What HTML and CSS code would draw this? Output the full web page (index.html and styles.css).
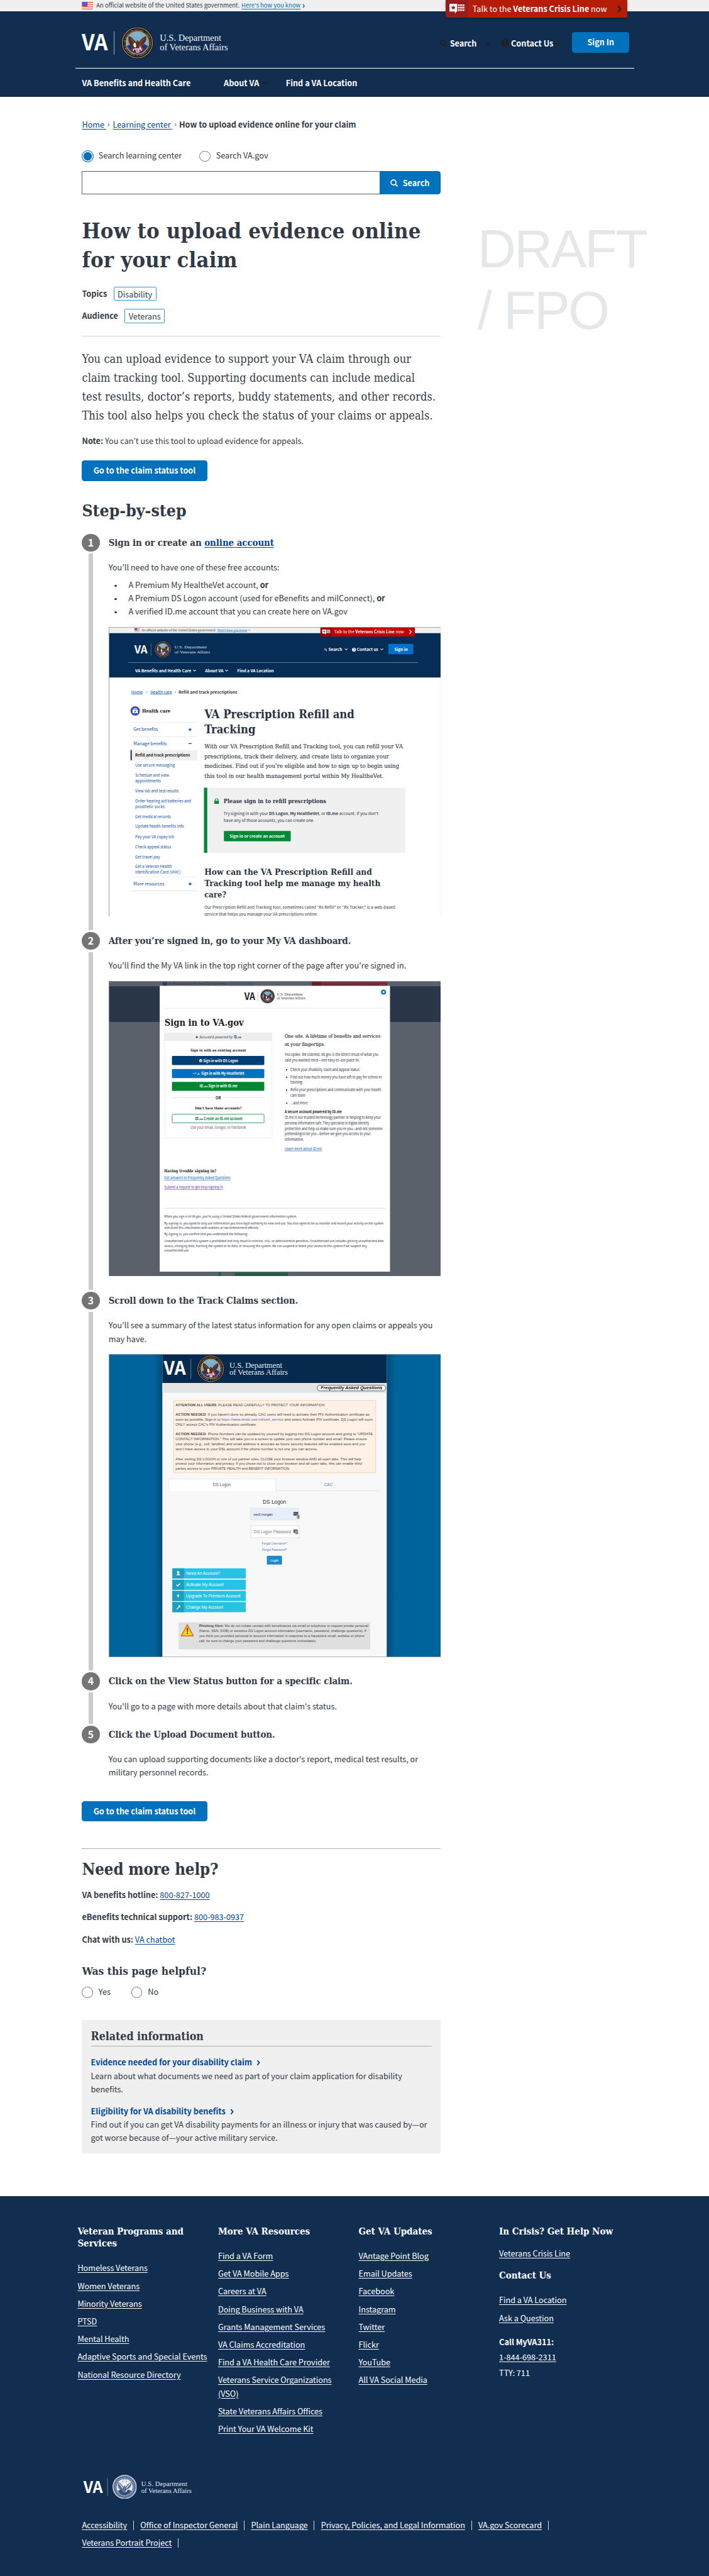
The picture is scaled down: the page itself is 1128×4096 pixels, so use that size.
FILE: index.html
```html
<!DOCTYPE html>
<html lang="en">
<head>
<meta charset="utf-8">
<title>How to upload evidence online for your claim</title>
<link rel="stylesheet" href="styles.css">
</head>
<body>
<svg class="defs" width="0" height="0" aria-hidden="true">
  <symbol id="flag" viewBox="0 0 20 14">
    <path fill="#fff" d="M0 0h20v14H0z"/>
    <path fill="#ee6a50" d="M0 0h20v2H0zM0 4h20v2H0zM0 8h20v2H0zM0 12h20v2H0z"/>
    <path fill="#3a48c8" d="M0 0h10v8H0z"/>
    <path stroke="#c9cff5" stroke-width="1" stroke-dasharray="1 1.6" d="M1 1.8h8.500M1.500 4h8M1 6.200h8.500"/>
  </symbol>
  <symbol id="sealmono" viewBox="0 0 58 58">
    <circle cx="29" cy="29" r="28" fill="#8c9bb3" stroke="#dfe5ee" stroke-width="1.500"/>
    <circle cx="29" cy="29" r="24" fill="none" stroke="#26416b" stroke-width="3" stroke-dasharray="1.800 1.600"/>
    <circle cx="29" cy="29" r="20" fill="#e9edf3" stroke="#12305a" stroke-width="1"/>
    <path d="M13 18c4 0 7 3 9 6l5 5 2-4 3 4c3-5 6-9 13-11 1 6-1 11-5 14l-6 3-4 7-5-2-4 2-4-8c-4-3-5-8-4-16z" fill="#5b6f90"/>
    <path d="M15 20l10 12M43 20L33 32" stroke="#fff" stroke-width="1.500"/>
    <path d="M13 38c5 8 9 10 16 10s12-3 16-10l-8-3-4 6h-8l-4-6z" fill="#314c75"/>
    <path d="M26 12h1.500M31 12h1.500M24 16h1.500M32.500 16H34" stroke="#12305a" stroke-width="1.800"/>
  </symbol>
  <symbol id="down" viewBox="0 0 12 8"><path d="M1.500 1.500L6 6l4.500-4.500" fill="none" stroke="currentColor" stroke-width="2.400"/></symbol>
  <symbol id="right" viewBox="0 0 8 14"><path d="M1.500 1.500L6.200 7l-4.700 5.500" fill="none" stroke="currentColor" stroke-width="2.600"/></symbol>
  <symbol id="glass" viewBox="0 0 14 14"><circle cx="5.800" cy="5.800" r="4.600" fill="none" stroke="currentColor" stroke-width="1.900"/><path d="M9 9l4 4" stroke="currentColor" stroke-width="2.200"/></symbol>
  <symbol id="crisis" viewBox="0 0 29 18">
    <path fill="#fff" d="M1 0h13v14h-1l-3 4v-4H1q-1 0-1-1V1q0-1 1-1z"/>
    <path fill="#981b1e" d="M7 2.500l1.200 3h3.300L8.900 7.600l1 3.200L7 8.900l-2.900 1.900 1-3.200L2.500 5.500h3.300z"/>
    <path stroke="#fff" stroke-width="3" stroke-dasharray="3 1" d="M15.500 2.500H28M15.500 7H28M15.500 11.500H28"/>
  </symbol>
  <symbol id="lock" viewBox="0 0 12 14"><path fill="currentColor" d="M1 6h10q1 0 1 1v6q0 1-1 1H1q-1 0-1-1V7q0-1 1-1z"/><path d="M2.800 7V4a3.200 3.200 0 0 1 6.400 0v3" fill="none" stroke="currentColor" stroke-width="1.800"/></symbol>
</svg>

<div class="page">
  <div class="gov">
    <svg class="gov-flag"><use href="#flag"/></svg>
    <span>An official website of the United States government.</span>
    <a href="#">Here's how you know</a>
    <svg class="gov-chev"><use href="#right"/></svg>
  </div>
  <a class="crisis" href="#">
    <span class="crisis-icon"><svg width="29" height="18"><use href="#crisis"/></svg></span>
    <span class="crisis-text">Talk to the <b>Veterans Crisis Line</b> now</span>
    <svg class="crisis-chev"><use href="#right"/></svg>
  </a>
  <header class="header">
    <div class="header-top">
      <svg class="logo" width="268" height="60" viewBox="0 0 268 60">
        <text class="n b" x="0" y="43" font-size="39.600" textLength="47" lengthAdjust="spacingAndGlyphs" fill="#fff">VA</text>
        <path d="M58.500 9v42" stroke="#b7c1cf"/>
        <g transform="translate(71.500 0.500)">
          <g id="seal">
            <circle cx="29" cy="29" r="28.500" fill="#141433" stroke="#0d0d26"/>
            <circle cx="29" cy="29" r="27.200" fill="none" stroke="#c79a3a" stroke-width="1.300"/>
            <path id="ring" d="M7.500 29a21.500 21.500 0 0 1 43 0a21.500 21.500 0 0 1-43 0" fill="none"/>
            <text class="sealtext" font-size="4.800" fill="#d9b861"><textPath href="#ring" startOffset="0" textLength="134">OF VETERANS AFFAIRS · UNITED STATES OF AMERICA · DEPARTMENT ·</textPath></text>
            <circle cx="29" cy="29" r="20.500" fill="#75b1d6" stroke="#c79a3a" stroke-width="1.300"/>
            <path d="M10 35c4 8 10 13 19 13.500S44 43 48 35l-7-4-12 5-12-5z" fill="#28356e"/>
            <path d="M18 41l5-8 3 2-4 9zM40 41l-5-8-3 2 4 9z" fill="#c8323c"/>
            <path d="M20.500 42.500l4.500-8 1.500 1-4 8zM37.500 42.500l-4.500-8-1.500 1 4 8z" fill="#f1eef0"/>
            <path d="M13 17c4 0 7 3 9 6l5 5 2-4 3 4c3-5 6-9 13-11 1 6-1 11-5 14l-6 3-4 7-5-2-4 2-4-8c-4-3-5-8-4-16z" fill="#5a2f1a"/>
            <path d="M17 21l7 9 2 6M41 21l-6 8-3 6" stroke="#96582d" stroke-width="1.200" fill="none"/>
            <path d="M22 31c0-2 3-3 4-1l1 5-2 3-3-3z" fill="#f7f4ee"/>
            <path d="M24 39h11l-3 8h-5z" fill="#e8e4ea"/>
            <path d="M27 40v6M30 40v6M33 40v4" stroke="#c8323c" stroke-width="1.300"/>
            <path d="M26 12h1.500M30 12h1.500M24.500 15h1.500M28.500 15H30M32.500 15H34" stroke="#e8c34b" stroke-width="1.800"/>
          </g>
        </g>
        <g class="t" fill="#f0f2f5" font-size="16.500"><text x="141" y="26" textLength="111">U.S. Department</text><text x="141" y="43" textLength="123">of Veterans Affairs</text></g>
      </svg>
      <div class="tools">
        <svg class="i-glass"><use href="#glass"/></svg><span>Search</span><svg class="i-down"><use href="#down"/></svg>
        <span class="i-help">?</span><span>Contact Us</span><svg class="i-down i-tight"><use href="#down"/></svg>
        <a class="btn signin" href="#">Sign In</a>
      </div>
    </div>
    <nav class="nav"><a class="nav-a" href="#">VA Benefits and Health Care</a><a class="nav-b" href="#">About VA <svg><use href="#down"/></svg></a><a href="#">Find a VA Location</a></nav>
  </header>

  <div class="body">
    <main class="main">
      <div class="crumbs"><a href="#">Home </a><i>›</i><a href="#">Learning center </a><i class="grey">›</i><b>How to upload evidence online for your claim</b></div>
      <div class="scope"><span class="radio big on"></span><span class="scope-a">Search learning center</span><span class="radio"></span><span>Search VA.gov</span></div>
      <div class="search"><div class="field"></div><div class="search-btn"><svg width="14" height="14"><use href="#glass"/></svg>Search</div></div>
      <h1>How to upload evidence online<br>for your claim</h1>
      <div class="meta"><b>Topics</b><span class="tag">Disability</span></div>
      <div class="meta"><b>Audience</b><span class="tag">Veterans</span></div>
      <hr class="rule">
      <p class="intro">You can upload evidence to support your VA claim through our<br>claim tracking tool. Supporting documents can include medical<br>test results, doctor’s reports, buddy statements, and other records.<br>This tool also helps you check the status of your claims or appeals.</p>
      <p class="note"><b>Note:</b> You can’t use this tool to upload evidence for appeals.</p>
      <a class="btn go" href="#">Go to the claim status tool</a>
      <h2 class="steps-title">Step-by-step</h2>

      <ol class="steps">
        <li class="step">
          <div class="mark"><span>1</span><i></i></div>
          <div class="step-body">
            <h3>Sign in or create an <a href="#">online account</a></h3>
            <p>You’ll need to have one of these free accounts:</p>
            <ul class="dots"><li>A Premium My HealtheVet account, <b>or</b></li><li>A Premium DS Logon account (used for eBenefits and milConnect), <b>or</b></li><li>A verified ID.me account that you can create here on VA.gov</li></ul>
            <svg class="shot" height="523" viewBox="15.200 31.400 1517.400 1491" preserveAspectRatio="none">
              <path fill="#fff" d="M15 31h1519v1493H15z"/>
              <path fill="#f0f0f0" d="M15 31h1519v33H15z"/>
              <use href="#flag" x="132" y="36" width="26" height="21"/>
              <path fill="#062d55" d="M15 63h1519v228H15z"/>
              <path fill="#c30000" d="M982 31h431v45q0 4-4 4H986q-4 0-4-4z"/><path fill="#990000" d="M982 31h52v49h-48q-4 0-4-4z"/>
              <svg x="989" y="44" width="40" height="26" viewBox="0 0 29 18" preserveAspectRatio="none"><use href="#crisis" width="29" height="18"/></svg>
              <path d="M1388 47l9 9-9 10" fill="none" stroke="#fff" stroke-width="4"/>
              <g class="n" fill="#3e4551">
                <text x="166" y="53" font-size="16.500" textLength="337" lengthAdjust="spacingAndGlyphs">An official website of the United States government</text>
                <text x="510" y="53" font-size="16.500" textLength="137" lengthAdjust="spacingAndGlyphs" fill="#0080d0" text-decoration="underline">Here's how you know</text>
                <path d="M651 44l6 6 6-6" fill="none" stroke="#0080d0" stroke-width="2"/>
                <text x="1045" y="65" font-size="22" textLength="318" lengthAdjust="spacingAndGlyphs" fill="#fff">Talk to the <tspan class="b">Veterans Crisis Line</tspan> now</text>
              </g>
              <g fill="#fff">
                <text class="n b" x="132" y="166" font-size="56" textLength="60" lengthAdjust="spacingAndGlyphs">VA</text>
                <path d="M207 115h2v63h-2z" fill="#6b8099"/>
                <use href="#seal" transform="translate(224 103) scale(1.328 1.500)"/>
                <g class="t" font-size="23" fill="#dde3ea"><text x="316" y="142" textLength="147" lengthAdjust="spacingAndGlyphs">U.S. Department</text><text x="316" y="166" textLength="162" lengthAdjust="spacingAndGlyphs">of Veterans Affairs</text></g>
                <g class="n b" font-size="21.500">
                  <text x="1018" y="155" textLength="63" lengthAdjust="spacingAndGlyphs">Search</text>
                  <text x="1148" y="155" textLength="98" lengthAdjust="spacingAndGlyphs">Contact us</text>
                  <text x="136" y="263" textLength="256" lengthAdjust="spacingAndGlyphs">VA Benefits and Health Care</text>
                  <text x="455" y="263" textLength="84" lengthAdjust="spacingAndGlyphs">About VA</text>
                  <text x="602" y="263" textLength="167" lengthAdjust="spacingAndGlyphs">Find a VA Location</text>
                </g>
                <circle cx="1004" cy="146" r="4" fill="none" stroke="#fff" stroke-width="2"/><path d="M1007 149l4 5M1093 143l6 6 6-6M1256 143l6 6 6-6M401 252l6 6 6-6M547 252l6 6 6-6" fill="none" stroke="#fff" stroke-width="3"/>
                <ellipse cx="1135" cy="148" rx="9" ry="10"/><text class="n b" x="1131" y="154" font-size="16" fill="#062d55">?</text>
                <path fill="#c0cad5" d="M104 214h1324v2H104z"/>
                <rect x="1292" y="118" width="114" height="53" rx="5" fill="#0071c8"/><text class="n b" x="1319" y="153" font-size="21.500" textLength="61" lengthAdjust="spacingAndGlyphs">Sign in</text>
              </g>
              <g class="n" font-size="21.500" fill="#0b4f9e">
                <text x="118" y="373" textLength="52" lengthAdjust="spacingAndGlyphs" text-decoration="underline">Home</text><text x="185" y="372">›</text>
                <text x="205" y="373" textLength="99" lengthAdjust="spacingAndGlyphs" text-decoration="underline">Health care</text><text x="315" y="372">›</text>
                <text class="b" x="334" y="373" textLength="268" lengthAdjust="spacingAndGlyphs" fill="#323a45">Refill and track prescriptions</text>
              </g>
              <ellipse cx="136" cy="463" rx="21.500" ry="24" fill="#3a50b5"/><rect x="124" y="457" width="24" height="18" rx="2" fill="#fff"/><path d="M131 457v-6h10v6" fill="none" stroke="#fff" stroke-width="3"/><path d="M136 461v10M131 466h10" stroke="#3a50b5" stroke-width="3"/>
              <text class="s b" x="167" y="472" font-size="24" textLength="130" lengthAdjust="spacingAndGlyphs" fill="#111">Health care</text>
              <path fill="#d8d9dc" d="M115 522h305v2H115zM115 594h305v2H115zM115 1317h305v2H115zM115 1388h305v2H115z"/>
              <path fill="#f0f0f0" d="M115 664h305v53H115z"/><path fill="#111" d="M115 664h5v53h-5z"/>
              <path stroke="#0b4f9e" stroke-width="4" d="M379 559h15M386.500 551v16M379 631h15M379 1353h15M386.500 1345v16"/>
              <g class="n" fill="#0b4f9e" font-size="22.500">
                <text x="128" y="566" textLength="112" lengthAdjust="spacingAndGlyphs">Get benefits</text>
                <text x="128" y="638" textLength="153" lengthAdjust="spacingAndGlyphs">Manage benefits</text>
                <text x="128" y="1360" textLength="141" lengthAdjust="spacingAndGlyphs">More resources</text>
              </g>
              <g class="n" fill="#0b4f9e" font-size="20">
                <text class="b" x="136" y="698" textLength="250" lengthAdjust="spacingAndGlyphs" fill="#212121">Refill and track prescriptions</text>
                <text x="136" y="751" textLength="181" lengthAdjust="spacingAndGlyphs">Use secure messaging</text>
                <text x="136" y="802" textLength="155" lengthAdjust="spacingAndGlyphs">Schedule and view</text>
                <text x="136" y="830" textLength="117" lengthAdjust="spacingAndGlyphs">appointments</text>
                <text x="136" y="882" textLength="198" lengthAdjust="spacingAndGlyphs">View lab and test results</text>
                <text x="136" y="934" textLength="255" lengthAdjust="spacingAndGlyphs">Order hearing aid batteries and</text>
                <text x="136" y="962" textLength="134" lengthAdjust="spacingAndGlyphs">prosthetic socks</text>
                <text x="136" y="1014" textLength="163" lengthAdjust="spacingAndGlyphs">Get medical records</text>
                <text x="136" y="1065" textLength="223" lengthAdjust="spacingAndGlyphs">Update health benefits info</text>
                <text x="136" y="1117" textLength="178" lengthAdjust="spacingAndGlyphs">Pay your VA copay bill</text>
                <text x="136" y="1169" textLength="164" lengthAdjust="spacingAndGlyphs">Check appeal status</text>
                <text x="136" y="1221" textLength="113" lengthAdjust="spacingAndGlyphs">Get travel pay</text>
                <text x="136" y="1272" textLength="167" lengthAdjust="spacingAndGlyphs">Get a Veteran Health</text>
                <text x="136" y="1300" textLength="208" lengthAdjust="spacingAndGlyphs">Identification Card (VHIC)</text>
              </g>
              <g class="s b" fill="#2b3440">
                <text x="452" y="500" font-size="58" textLength="685" lengthAdjust="spacingAndGlyphs">VA Prescription Refill and</text>
                <text x="452" y="577" font-size="58" textLength="233" lengthAdjust="spacingAndGlyphs">Tracking</text>
                <text x="452" y="1305" font-size="44" textLength="765" lengthAdjust="spacingAndGlyphs">How can the VA Prescription Refill and</text>
                <text x="452" y="1363" font-size="44" textLength="804" lengthAdjust="spacingAndGlyphs">Tracking tool help me manage my health</text>
                <text x="452" y="1421" font-size="44" textLength="100" lengthAdjust="spacingAndGlyphs">care?</text>
              </g>
              <g class="s" fill="#323a45" font-size="30" stroke="#323a45" stroke-width=".5">
                <text x="452" y="657" textLength="906" lengthAdjust="spacingAndGlyphs">With our VA Prescription Refill and Tracking tool, you can refill your VA</text>
                <text x="452" y="707" textLength="842" lengthAdjust="spacingAndGlyphs">prescriptions, track their delivery, and create lists to organize your</text>
                <text x="452" y="757" textLength="889" lengthAdjust="spacingAndGlyphs">medicines. Find out if you’re eligible and how to sign up to begin using</text>
                <text x="452" y="808" textLength="819" lengthAdjust="spacingAndGlyphs">this tool in our health management portal within My HealtheVet.</text>
              </g>
              <path fill="#f0f0f0" d="M450 858h920v335H450z"/><path fill="#008a37" d="M450 858h15v335h-15z"/>
              <svg x="496" y="912" width="23" height="30" viewBox="0 0 12 14" preserveAspectRatio="none" color="#008a37"><use href="#lock" width="12" height="14"/></svg>
              <text class="s b" x="540" y="936" font-size="27" textLength="468" lengthAdjust="spacingAndGlyphs" fill="#2b3440">Please sign in to refill prescriptions</text>
              <g class="n" fill="#323a45" font-size="20.500">
                <text x="540" y="1000" textLength="706" lengthAdjust="spacingAndGlyphs">Try signing in with your <tspan class="b">DS Logon</tspan>, <tspan class="b">My HealtheVet</tspan>, or <tspan class="b">ID.me</tspan> account. If you don’t</text>
                <text x="540" y="1035" textLength="414" lengthAdjust="spacingAndGlyphs">have any of those accounts, you can create one.</text>
                <text x="452" y="1481" textLength="871" lengthAdjust="spacingAndGlyphs">Our Prescription Refill and Tracking tool, sometimes called “Rx Refill” or “Rx Tracker,” is a web-based</text>
                <text x="452" y="1516" textLength="518" lengthAdjust="spacingAndGlyphs">service that helps you manage your VA prescriptions online.</text>
              </g>
              <rect x="541" y="1080" width="305" height="54" rx="4" fill="#008a37"/><text class="n b" x="567" y="1115" font-size="20.500" textLength="252" lengthAdjust="spacingAndGlyphs" fill="#fff">Sign in or create an account</text>
              <rect x="16.500" y="32.800" width="1515" height="1488" fill="none" stroke="#999" stroke-width="2.600"/>
            </svg>
          </div>
        </li>

        <li class="step">
          <div class="mark"><span>2</span><i></i></div>
          <div class="step-body">
            <h3>After you’re signed in, go to your My VA dashboard.</h3>
            <p>You'll find the My VA link in the top right corner of the page after you're signed in.</p>
            <svg class="shot" height="533" viewBox="151.500 260 1385.500 1267" preserveAspectRatio="none">
              <path fill="#5b616b" d="M151 260h1387v1268H151z"/><path fill="#2a3748" d="M151 282h1387v153H151z"/>
              <path fill="#323a5e" d="M376 265h19v14h-19z"/><path fill="#7f2b37" d="M998 264h314v20H998z"/><path fill="#651e2b" d="M998 264h38v20h-38z"/>
              <g class="n" font-size="12.500"><text x="401" y="276" textLength="247" lengthAdjust="spacingAndGlyphs" fill="#242b36">An official website of the United States government</text><text x="653" y="276" textLength="100" lengthAdjust="spacingAndGlyphs" fill="#1b4a76" text-decoration="underline">Here's how you know</text><text x="1044" y="284" font-size="17" textLength="232" lengthAdjust="spacingAndGlyphs" fill="#2c3440">Talk to the Veterans Crisis Line now</text></g>
              <path fill="#16603e" d="M610 1507h9v18h-9zM676 1511h222v14H676z"/>
              <path fill="#fff" d="M364 280h960v1226H364z"/>
              <text class="n b" x="717" y="340" font-size="41" textLength="45" lengthAdjust="spacingAndGlyphs" fill="#212121">VA</text><path fill="#bbb" d="M772 304h2v42h-2z"/>
              <use href="#seal" transform="translate(784 295) scale(1.017 1.035)"/>
              <g class="t" font-size="16.500" fill="#333"><text x="852" y="323" textLength="108" lengthAdjust="spacingAndGlyphs">U.S. Department</text><text x="852" y="339" textLength="119" lengthAdjust="spacingAndGlyphs">of Veterans Affairs</text></g>
              <circle cx="1297" cy="307" r="10.500" fill="#0071bb"/><path d="M1293 303l8 8M1301 303l-8 8" stroke="#fff" stroke-width="3"/>
              <path fill="#e4e4e6" d="M383 375h922v2.500H383z"/><path fill="#ccc" d="M383 1233h922v2H383z"/>
              <text class="s b" x="384" y="451" font-size="39" textLength="330" lengthAdjust="spacingAndGlyphs" fill="#212121">Sign in to VA.gov</text>
              <rect x="384" y="482" width="448" height="451" fill="#fff" stroke="#ececec" stroke-width="2.500"/><path fill="#ededee" d="M383 481h450v35H383z"/>
              <svg x="514" y="494" width="9" height="11" viewBox="0 0 12 14" color="#212f45"><use href="#lock" width="12" height="14"/></svg>
              <g class="n" font-size="15.500" fill="#323a45"><text x="528" y="505" textLength="139" lengthAdjust="spacingAndGlyphs" font-style="italic">Secured &amp; powered by</text><text class="b" x="673" y="505" textLength="30" lengthAdjust="spacingAndGlyphs" fill="#243b60">ID.<tspan font-style="italic" font-size="12">me</tspan></text></g>
              <g class="s b" font-size="16" fill="#212121"><text x="492" y="561" textLength="232" lengthAdjust="spacingAndGlyphs">Sign in with an existing account</text><text x="511" y="810" textLength="194" lengthAdjust="spacingAndGlyphs">Don't have those accounts?</text><text x="383" y="1080" font-size="18" textLength="217" lengthAdjust="spacingAndGlyphs">Having trouble signing in?</text></g>
              <rect x="415" y="581" width="385" height="39" rx="4" fill="#003e73"/><rect x="415" y="637" width="385" height="39" rx="4" fill="#0071c1"/><rect x="415" y="692" width="385" height="39" rx="4" fill="#00872f"/><rect x="416" y="831" width="383" height="37" rx="4" fill="#fff" stroke="#2c9c58" stroke-width="2.500"/>
              <path d="M529 598l6-4 6 4v9h-12z" fill="#fff"/><path d="M532 600v5M535 600v5M538 600v5" stroke="#003e73" stroke-width="1.500"/><path d="M503 656h8q4-4 8 0M520 661q8 0 5-8M524 656l8 5" fill="none" stroke="#fff" stroke-width="2"/>
              <g class="n b" font-size="15.500" fill="#fff"><text x="545" y="607" textLength="146" lengthAdjust="spacingAndGlyphs">Sign in with DS Logon</text><text x="537" y="662" textLength="180" lengthAdjust="spacingAndGlyphs">Sign in with My HealtheVet</text><text x="530" y="717" textLength="158" lengthAdjust="spacingAndGlyphs">ID.<tspan font-style="italic" font-size="11">me</tspan> Sign in with ID.me</text><text x="597" y="766" textLength="22" lengthAdjust="spacingAndGlyphs" fill="#212121">OR</text><text x="511" y="856" textLength="198" lengthAdjust="spacingAndGlyphs" fill="#00872f"><tspan fill="#243b60">ID.<tspan font-style="italic" font-size="11">me</tspan></tspan> Create an ID.me account</text></g>
              <path fill="#ddd" d="M415 760h174v2H415zM626 760h174v2H626z"/>
              <text class="n" x="492" y="895" font-size="15" textLength="232" lengthAdjust="spacingAndGlyphs" fill="#5b616b">Use your email, Google, or Facebook</text>
              <g class="s" font-size="20.500" fill="#212121" stroke="#212121" stroke-width=".3"><text x="885" y="504" textLength="399" lengthAdjust="spacingAndGlyphs">One site. A lifetime of benefits and services</text><text x="885" y="538" textLength="169" lengthAdjust="spacingAndGlyphs">at your fingertips.</text></g>
              <g class="n" font-size="15" fill="#2b323c">
                <text x="885" y="582" textLength="390" lengthAdjust="spacingAndGlyphs">You spoke. We listened. VA.gov is the direct result of what you</text><text x="885" y="606" textLength="312" lengthAdjust="spacingAndGlyphs">said you wanted most—one easy-to-use place to:</text>
                <text x="909" y="645" textLength="288" lengthAdjust="spacingAndGlyphs">Check your disability claim and appeal status</text>
                <text x="909" y="677" textLength="381" lengthAdjust="spacingAndGlyphs">Find out how much money you have left to pay for school or</text><text x="909" y="700" textLength="49" lengthAdjust="spacingAndGlyphs">training</text>
                <text x="909" y="732" textLength="378" lengthAdjust="spacingAndGlyphs">Refill your prescriptions and communicate with your health</text><text x="909" y="756" textLength="62" lengthAdjust="spacingAndGlyphs">care team</text><text x="909" y="788" textLength="72" lengthAdjust="spacingAndGlyphs">...and more</text>
                <text class="b" x="885" y="827" textLength="238" lengthAdjust="spacingAndGlyphs" fill="#212121">A secure account powered by ID.me</text>
                <text x="885" y="851" textLength="401" lengthAdjust="spacingAndGlyphs">ID.me is our trusted technology partner in helping to keep your</text><text x="885" y="874" textLength="352" lengthAdjust="spacingAndGlyphs">personal information safe. They specialize in digital identity</text><text x="885" y="898" textLength="408" lengthAdjust="spacingAndGlyphs">protection and help us make sure you're you—and not someone</text><text x="885" y="922" textLength="358" lengthAdjust="spacingAndGlyphs">pretending to be you—before we give you access to your</text><text x="885" y="945" textLength="80" lengthAdjust="spacingAndGlyphs">information.</text>
                <text x="885" y="985" textLength="155" lengthAdjust="spacingAndGlyphs" fill="#0b5cad" text-decoration="underline">Learn more about ID.me</text>
                <text x="383" y="1111" textLength="276" lengthAdjust="spacingAndGlyphs" fill="#0b5cad" text-decoration="underline">Get answers to Frequently Asked Questions</text><text x="383" y="1151" textLength="245" lengthAdjust="spacingAndGlyphs" fill="#6a35a8" text-decoration="underline">Submit a request to get help signing in</text>
              </g>
              <path fill="#212121" d="M891 638h5v5h-5zM891 670h5v5h-5zM891 725h5v5h-5zM891 781h5v5h-5z"/>
              <g class="n" font-size="13.500" fill="#2b323c">
                <text x="383" y="1275" textLength="553" lengthAdjust="spacingAndGlyphs">When you sign in to VA.gov, you're using a United States federal government information system.</text>
                <text x="383" y="1303" textLength="914" lengthAdjust="spacingAndGlyphs">By signing in, you agree to only use information you have legal authority to view and use. You also agree to let us monitor and record your activity on the system</text>
                <text x="383" y="1323" textLength="396" lengthAdjust="spacingAndGlyphs">and share this information with auditors or law enforcement officials.</text>
                <text x="383" y="1351" textLength="349" lengthAdjust="spacingAndGlyphs">By signing in, you confirm that you understand the following:</text>
                <text x="383" y="1379" textLength="915" lengthAdjust="spacingAndGlyphs">Unauthorized use of this system is prohibited and may result in criminal, civil, or administrative penalties. Unauthorized use includes gaining unauthorized data</text>
                <text x="383" y="1400" textLength="844" lengthAdjust="spacingAndGlyphs">access, changing data, harming the system or its data, or misusing the system. We can suspend or block your access to this system if we suspect any</text>
                <text x="383" y="1421" textLength="104" lengthAdjust="spacingAndGlyphs">unauthorized use.</text>
              </g>
              <rect x="152.500" y="261" width="1383.500" height="1265" fill="none" stroke="#858991" stroke-width="2.300"/>
            </svg>
          </div>
        </li>

        <li class="step">
          <div class="mark"><span>3</span><i></i></div>
          <div class="step-body">
            <h3>Scroll down to the Track Claims section.</h3>
            <p>You'll see a summary of the latest status information for any open claims or appeals you<br>may have.</p>
            <svg class="shot" height="547" viewBox="152.300 297 1386.500 1225" preserveAspectRatio="none">
              <defs><linearGradient id="shadeL"><stop offset="0" stop-color="#00649c"/><stop offset="1" stop-color="#024a78"/></linearGradient><linearGradient id="shadeR"><stop offset="0" stop-color="#024a78"/><stop offset="1" stop-color="#00649c"/></linearGradient></defs>
              <path fill="#00649c" d="M152 297h1388v1226H152z"/><path fill="url(#shadeL)" d="M340 297h36v1226h-36z"/><path fill="url(#shadeR)" d="M1312 297h36v1226h-36z"/>
              <path fill="#f8f8f8" d="M376 297h936v1226H376z"/><path fill="#062a4e" d="M376 297h936v117H376z"/><path fill="#e4e4e4" d="M376 414h936v40H376z"/>
              <text class="n b" x="382" y="382" font-size="76" textLength="92" lengthAdjust="spacingAndGlyphs" fill="#fff">VA</text><path fill="#8596aa" d="M494 317h2v80h-2z"/>
              <use href="#seal" transform="translate(520 301) scale(1.983 1.914)"/>
              <g class="t" font-size="32" fill="#e8edf2"><text x="656" y="352" textLength="220" lengthAdjust="spacingAndGlyphs">U.S. Department</text><text x="656" y="382" textLength="243" lengthAdjust="spacingAndGlyphs">of Veterans Affairs</text></g>
              <rect x="1022" y="423" width="286" height="23" rx="11" fill="#fff" stroke="#333" stroke-width="2"/><text class="a b" x="1037" y="440" font-size="17" font-style="italic" textLength="257" lengthAdjust="spacingAndGlyphs" fill="#111">Frequently Asked Questions</text>
              <rect x="423" y="485" width="843" height="292" fill="#fff1e6" stroke="#f8c79b" stroke-width="2"/>
              <g class="a" font-size="14.500" fill="#444">
                <text x="431" y="507" textLength="622" lengthAdjust="spacingAndGlyphs"><tspan class="b">ATTENTION ALL USERS</tspan>: PLEASE READ CAREFULLY TO PROTECT YOUR INFORMATION</text>
                <text x="431" y="547" textLength="809" lengthAdjust="spacingAndGlyphs"><tspan class="b">ACTION NEEDED</tspan>: If you haven't done so already, CAC users will need to activate their PIV Authentication certificate as</text>
                <text x="431" y="567" textLength="822" lengthAdjust="spacingAndGlyphs">soon as possible. Sign in to <tspan fill="#4a66b8">https://www.dmdc.osd.mil/self_service</tspan> and select Activate PIV certificate. DS Logon will soon</text>
                <text x="431" y="587" textLength="339" lengthAdjust="spacingAndGlyphs">ONLY accept CAC's PIV Authentication certificate.</text>
                <text x="431" y="626" textLength="823" lengthAdjust="spacingAndGlyphs"><tspan class="b">ACTION NEEDED</tspan>: Phone Numbers can be updated by yourself by logging into DS Logon account and going to "UPDATE</text>
                <text x="431" y="646" textLength="798" lengthAdjust="spacingAndGlyphs">CONTACT INFORMATION." This will take you to a screen to update your own phone number and email. Please ensure</text>
                <text x="431" y="666" textLength="791" lengthAdjust="spacingAndGlyphs">your phone (e.g., cell, landline) and email address is accurate as future security features will be enabled soon and you</text>
                <text x="431" y="686" textLength="593" lengthAdjust="spacingAndGlyphs">won't have access to your DSL account if the phone number is not one you can access.</text>
                <text x="431" y="726" textLength="775" lengthAdjust="spacingAndGlyphs">After visiting DS LOGON or one of our partner sites, CLOSE your browser window AND all open tabs. This will help</text>
                <text x="431" y="745" textLength="777" lengthAdjust="spacingAndGlyphs">protect your information and privacy. If you chose not to close your browser and all open tabs, this can enable third</text>
                <text x="431" y="765" textLength="478" lengthAdjust="spacingAndGlyphs">parties access to your PRIVATE HEALTH and BENEFIT INFORMATION.</text>
              </g>
              <path fill="#fff" stroke="#ddd" stroke-width="2" d="M401 850v-48h449v48"/><path fill="#ddd" d="M850 849h437v2H850z"/>
              <g class="a" font-size="17" fill="#555"><text x="587" y="831" textLength="75" lengthAdjust="spacingAndGlyphs">DS Logon</text><text x="1051" y="831" textLength="35" lengthAdjust="spacingAndGlyphs" fill="#5a74c0">CAC</text><text x="795" y="903" font-size="21" textLength="97" lengthAdjust="spacingAndGlyphs" fill="#333">DS Logon</text></g>
              <path fill="#e6eefc" stroke="#ccd6e8" d="M743 920h202v47H743z"/><path fill="#fff" stroke="#ccc" stroke-width="1.500" d="M746 991h201v48H746z"/>
              <g class="a"><text x="756" y="950" font-size="14.500" textLength="81" lengthAdjust="spacingAndGlyphs" fill="#222">cecil.morgan</text><text x="758" y="1021" font-size="17" textLength="155" lengthAdjust="spacingAndGlyphs" fill="#777">DS Logon Password</text></g>
              <path fill="#555" d="M923 935h20v15h-20zM923 1006h18v14h-18z"/><path fill="#888" stroke="#fff" d="M937 947h12v16h-12zM931 1012h12v14h-12z"/><path stroke="#ccc" stroke-width="2" stroke-dasharray="3 2" d="M925 942h15M925 1011h14"/>
              <g class="a" font-size="13" fill="#5a74c0"><text x="791" y="1067" textLength="105" lengthAdjust="spacingAndGlyphs">Forgot Username?</text><text x="792" y="1092" textLength="103" lengthAdjust="spacingAndGlyphs">Forgot Password?</text></g>
              <rect x="812" y="1112" width="63" height="36" rx="4" fill="#1e88cf"/><text class="a" x="826" y="1135" font-size="14.500" textLength="35" lengthAdjust="spacingAndGlyphs" fill="#fff">Login</text>
              <g fill="#27c3e4"><rect x="417" y="1163" width="307" height="41" rx="3"/><rect x="417" y="1209" width="307" height="41" rx="3"/><rect x="417" y="1254" width="307" height="41" rx="3"/><rect x="417" y="1299" width="307" height="41" rx="3"/></g>
              <g fill="#1f9fbd"><path d="M418 1163h48v41h-48zM418 1209h48v41h-48zM418 1254h48v41h-48zM418 1299h48v41h-48z"/></g>
              <g fill="#fff"><circle cx="442" cy="1179" r="5"/><path d="M440 1181h5v5l5 3v2h-15v-2l5-3z"/><path d="M435 1229l5 5 10-9" fill="none" stroke="#fff" stroke-width="4"/><path d="M442 1267l6 7h-4v7h-4v-7h-4z"/><path d="M434 1328l10-10-1-6 6-1-2 3 2 2 3-2-1 6-6 1-9 9z"/></g>
              <g class="a" font-size="17" fill="#fff"><text x="475" y="1189" textLength="142" lengthAdjust="spacingAndGlyphs">Need An Account?</text><text x="475" y="1235" textLength="156" lengthAdjust="spacingAndGlyphs">Activate My Account</text><text x="475" y="1280" textLength="227" lengthAdjust="spacingAndGlyphs">Upgrade To Premium Account</text><text x="475" y="1326" textLength="154" lengthAdjust="spacingAndGlyphs">Change My Account</text></g>
              <path fill="#dfdfdf" d="M444 1381h799v109H444z"/>
              <path d="M480 1391l25 45h-50z" fill="#ffd21e" stroke="#e0671d" stroke-width="4" stroke-linejoin="round"/><path d="M478 1404h5l-1 16h-3zM478 1423h4v5h-4z" fill="#222"/>
              <g class="a" font-size="14" fill="#444"><text x="529" y="1401" textLength="706" lengthAdjust="spacingAndGlyphs"><tspan class="b">Phishing Alert:</tspan> We do not initiate contact with beneficiaries via email or telephone to request private personal</text><text x="529" y="1421" textLength="698" lengthAdjust="spacingAndGlyphs">(Name, SSN, DOB) or sensitive DS Logon account information (username, password, challenge questions). If</text><text x="529" y="1441" textLength="690" lengthAdjust="spacingAndGlyphs">you think you provided personal or account information in response to a fraudulent email, website or phone</text><text x="529" y="1461" textLength="490" lengthAdjust="spacingAndGlyphs">call, be sure to change your password and challenge questions immediately.</text></g>
              <rect x="153.300" y="298" width="1384.500" height="1223" fill="none" stroke="#a0a3a8" stroke-width="2.300"/>
            </svg>
          </div>
        </li>

        <li class="step short">
          <div class="mark"><span>4</span><i></i></div>
          <div class="step-body"><h3>Click on the View Status button for a specific claim.</h3><p>You'll go to a page with more details about that claim's status.</p></div>
        </li>
        <li class="step last">
          <div class="mark"><span>5</span></div>
          <div class="step-body"><h3>Click the Upload Document button.</h3><p>You can upload supporting documents like a doctor's report, medical test results, or<br>military personnel records.</p></div>
        </li>
      </ol>

      <a class="btn go go2" href="#">Go to the claim status tool</a>
      <hr class="rule rule2">
      <h2 class="help">Need more help?</h2>
      <div class="contacts">
        <p><b>VA benefits hotline:</b> <a href="#">800-827-1000</a></p>
        <p><b>eBenefits technical support:</b> <a href="#">800-983-0937</a></p>
        <p><b>Chat with us:</b> <a href="#">VA chatbot</a></p>
      </div>
      <h3 class="helpful">Was this page helpful?</h3>
      <div class="yesno"><span class="radio"></span><span class="yes">Yes</span><span class="radio"></span><span>No</span></div>
      <section class="related">
        <h3>Related information</h3>
        <div class="rel"><a href="#">Evidence needed for your disability claim <svg><use href="#right"/></svg></a><p>Learn about what documents we need as part of your claim application for disability<br>benefits.</p></div>
        <div class="rel"><a href="#">Eligibility for VA disability benefits <svg><use href="#right"/></svg></a><p>Find out if you can get VA disability payments for an illness or injury that was caused by—or<br>got worse because of—your active military service.</p></div>
      </section>
    </main>
    <aside class="draft">DRAFT<br>/ FPO</aside>
  </div>

  <footer class="footer">
    <div class="cols">
      <div><h4>Veteran Programs and<br>Services</h4><ul><li><a href="#">Homeless Veterans</a></li><li><a href="#">Women Veterans</a></li><li><a href="#">Minority Veterans</a></li><li><a href="#">PTSD</a></li><li><a href="#">Mental Health</a></li><li><a href="#">Adaptive Sports and Special Events</a></li><li><a href="#">National Resource Directory</a></li></ul></div>
      <div><h4>More VA Resources</h4><ul><li><a href="#">Find a VA Form</a></li><li><a href="#">Get VA Mobile Apps</a></li><li><a href="#">Careers at VA</a></li><li><a href="#">Doing Business with VA</a></li><li><a href="#">Grants Management Services</a></li><li><a href="#">VA Claims Accreditation</a></li><li><a href="#">Find a VA Health Care Provider</a></li><li><a href="#">Veterans Service Organizations<br>(VSO)</a></li><li><a href="#">State Veterans Affairs Offices</a></li><li><a href="#">Print Your VA Welcome Kit</a></li></ul></div>
      <div><h4>Get VA Updates</h4><ul><li><a href="#">VAntage Point Blog</a></li><li><a href="#">Email Updates</a></li><li><a href="#">Facebook</a></li><li><a href="#">Instagram</a></li><li><a href="#">Twitter</a></li><li><a href="#">Flickr</a></li><li><a href="#">YouTube</a></li><li><a href="#">All VA Social Media</a></li></ul></div>
      <div class="crisis-col"><h4>In Crisis? Get Help Now</h4><ul><li><a href="#">Veterans Crisis Line</a></li></ul><h4>Contact Us</h4><ul class="contact"><li><a href="#">Find a VA Location</a></li><li><a href="#">Ask a Question</a></li></ul><div class="call"><b>Call MyVA311:</b><a href="#">1-844-698-2311</a><span>TTY: 711</span></div></div>
    </div>
    <svg class="foot-logo" width="200" height="44" viewBox="0 0 200 44">
      <text class="n b" x="3" y="32.500" font-size="29.500" textLength="35" lengthAdjust="spacingAndGlyphs" fill="#fff">VA</text>
      <path d="M46.500 6v32" stroke="#7485a0"/>
      <use href="#sealmono" x="55.500" y="0" width="44" height="44"/>
      <g class="t" fill="#e4e8ee" font-size="12"><text x="107.500" y="20.500" textLength="83">U.S. Department</text><text x="107.500" y="32.800" textLength="91">of Veterans Affairs</text></g>
    </svg>
    <ul class="legal"><li><a href="#">Accessibility</a></li><li><a href="#">Office of Inspector General</a></li><li><a href="#">Plain Language</a></li><li><a href="#">Privacy, Policies, and Legal Information</a></li><li><a href="#">VA.gov Scorecard</a></li><li><a href="#">Veterans Portrait Project</a></li></ul>
  </footer>
</div>
</body>
</html>
```
FILE: styles.css
```css
* { box-sizing: border-box; }
body { margin: 0; background: #fff; }
h1, h2, h3, h4, p, ul, ol { margin: 0; padding: 0; }
ul, ol { list-style: none; }
a { color: #004795; text-underline-offset: 2px; }
svg { display: block; flex: none; }
.defs { position: absolute; }

/* One layout unit is 1/1280 of the page width. */
.page {
  position: relative;
  zoom: 0.88125;
  width: 1280px;
  height: 4648px;
  overflow: hidden;
  background: #fff;
  color: #323a45;
  font: 14.4px/24px "Noto Sans CJK KR", "Open Sans", sans-serif;
}
.n { font-family: "Noto Sans CJK KR", sans-serif; }
.s { font-family: "DejaVu Serif Condensed", "DejaVu Serif", serif; }
.t, .sealtext { font-family: "Liberation Serif", serif; }
.a { font-family: "Liberation Sans", sans-serif; }
.b { font-weight: bold; }
h1, h2, h3, h4, .intro { font-family: "DejaVu Serif Condensed", "DejaVu Serif", serif; }

/* Government banner */
.gov { display: flex; height: 20px; padding-left: 147px; background: #f0f0f0; font-size: 10.8px; line-height: 19px; }
.gov-flag { width: 21px; height: 14px; margin: 3px 6px 0 0; }
.gov a { margin-left: 3px; color: #0071bc; }
.gov-chev { width: 5px; height: 8px; margin: 7px 0 0 3px; color: #0071bc; }
.crisis { position: absolute; top: 0; left: 804px; display: flex; align-items: center; width: 329px; height: 32px; border-radius: 0 0 3px 3px; overflow: hidden; background: #b51d09; color: #fff; text-decoration: none; box-shadow: 0 2px 4px rgba(0, 0, 0, .3); }
.crisis-icon { display: flex; align-items: center; width: 41px; height: 32px; padding-left: 7px; background: #981b1e; }
.crisis-text { width: 260px; padding-left: 8px; line-height: 31px; white-space: nowrap; }
.crisis-chev { width: 8px; height: 14px; margin-left: 9px; color: #212121; }

/* Header */
.header { height: 155px; background: #112e51; color: #fff; }
.header-top { display: flex; align-items: center; justify-content: space-between; height: 104px; margin: 0 135px 0 136px; padding: 10px 9px 0 12px; border-bottom: 1px solid #fff; }
.logo { margin-top: 2px; }
.tools { display: flex; align-items: center; font-weight: bold; }
.tools > span { margin-top: 2px; }
.tools svg, .nav svg { color: #212121; }
.tools .i-glass { width: 13px; height: 13px; margin-right: 5px; margin-top: 3px; }
.tools .i-down { width: 12px; height: 8px; margin: 4px 0 0 14px; }
.tools .i-tight { margin-left: 0; }
.tools .i-help { width: 15px; height: 15px; margin: 2px 3px 0 18px; border-radius: 50%; background: #212121; color: #112e51; font-size: 11px; line-height: 15px; text-align: center; }
.btn { display: block; width: 226px; height: 37px; border-radius: 5px; background: #0071bc; color: #fff; font-weight: bold; line-height: 37px; text-align: center; text-decoration: none; }
.tools .signin { width: 103px; margin-left: 22px; }
.nav { display: flex; padding-left: 148px; line-height: 53px; }
.nav a { display: flex; align-items: center; color: #fff; font-weight: bold; text-decoration: none; }
.nav svg { width: 12px; height: 8px; margin-left: 7px; }
.nav-a { width: 256px; }
.nav-b { width: 112px; }

/* Page body */
.body { display: flex; padding-left: 148px; }
.main { width: 648px; padding-top: 37px; }
.draft { margin: 219px 0 0 66px; color: #e6e7e9; font: 96px/111px "Liberation Sans", sans-serif; letter-spacing: -3px; white-space: nowrap; }
.crumbs { display: flex; white-space: pre; }
.crumbs i { width: 12px; padding-left: 2px; color: #004795; font-style: normal; line-height: 23px; }
.crumbs .grey { color: #5b616b; padding-left: 3px; }
.scope { display: flex; align-items: flex-start; height: 25px; margin-top: 32px; }
.radio { width: 20px; height: 20px; margin: 4px 10px 0 0; border: 1px solid #757575; border-radius: 50%; background: #fff; }
.radio.big { width: 22px; height: 22px; margin: 3px 9px 0 -1px; }
.radio.on { border: 2px solid #0071bc; background: #0071bc; box-shadow: inset 0 0 0 2px #fff; }
.scope-a { width: 182px; }
.search { display: flex; height: 42px; margin-top: 16px; }
.field { width: 537px; border: 1px solid #5b616b; border-right: 0; }
.search-btn { display: flex; align-items: center; gap: 8px; width: 111px; padding-left: 20px; border-radius: 0 5px 5px 0; background: #0071bc; color: #fff; font-weight: bold; line-height: 40px; }
h1 { margin-top: 41px; font-size: 39px; line-height: 52px; letter-spacing: .25px; white-space: nowrap; }
.meta { display: flex; gap: 12px; height: 26px; margin-top: 14px; line-height: 26px; }
h1 + .meta { margin-top: 21px; }
.tag { padding: 0 6px; border: 1px solid #3d93cd; border-radius: 2px; line-height: 24px; }
.rule { height: 1px; margin: 23px 0 0; border: 0; background: #d0d2d5; }
.intro { margin-top: 24px; font-size: 20.500px; line-height: 34px; letter-spacing: .13px; white-space: nowrap; }
.note { margin-top: 16px; }
.go { margin-top: 24px; }
.steps-title { margin-top: 35px; font-size: 30px; line-height: 36px; }

/* Numbered steps */
.steps { margin-top: 24px; }
.step { display: flex; gap: 16px; }
.mark { display: flex; flex-direction: column; align-items: center; width: 32px; }
.mark span { width: 32px; height: 32px; border-radius: 50%; background: #757575; color: #fff; font-size: 18px; font-weight: bold; line-height: 31px; text-align: center; }
.mark i { flex: 1; width: 8px; margin: 4px 0; background: #ccc; }
.step-body { width: 600px; padding-bottom: 28px; }
.short .step-body { padding-bottom: 24px; }
.last .step-body { padding-bottom: 0; }
.step h3 { height: 32px; font-size: 17px; line-height: 33px; letter-spacing: -.1px; white-space: nowrap; }
.step p { margin-top: 16px; white-space: nowrap; }
.dots { margin-top: 8px; }
.dots li { display: flex; white-space: pre; }
.dots li::before { content: ""; width: 4px; height: 4px; margin: 12px 21px 0 11px; border-radius: 50%; background: #323a45; }
.shot { width: 600px; margin-top: 16px; }

/* Help and feedback */
.go2 { margin-top: 40px; }
.rule2 { margin-top: 48px; background: #a9aeb1; }
.help { margin-top: 20px; font-size: 29px; line-height: 36px; letter-spacing: -.1px; }
.contacts { display: flex; flex-direction: column; gap: 16px; margin-top: 15px; }
.helpful { margin-top: 32px; font-size: 19.700px; line-height: 28px; }
.yesno { display: flex; height: 24px; margin-top: 10px; }
.yes { width: 59px; }
.related { display: flex; flex-direction: column; gap: 16px; margin-top: 40px; padding: 16px; background: #f0f0f0; }
.related h3 { padding-bottom: 3px; border-bottom: 1px solid #a9aeb1; font-size: 20px; line-height: 28px; }
.rel a { display: flex; align-items: center; font-weight: bold; text-decoration: none; }
.rel svg { width: 7px; height: 11px; margin: 3px 0 0 8px; }
.rel p { white-space: nowrap; }

/* Footer */
.footer { height: 685px; margin-top: 78px; padding: 53px 0 0 140px; background: #112e51; color: #fff; }
.footer a { color: #fff; }
.footer h4 { font-size: 17px; line-height: 22px; white-space: nowrap; }
.cols { display: grid; grid-template-columns: repeat(4, 253.700px); height: 378px; }
.cols ul { display: flex; flex-direction: column; gap: 8px; margin-top: 20px; white-space: nowrap; letter-spacing: -.04px; }
.crisis-col ul { margin-top: 16px; }
.crisis-col ul + h4 { margin-top: 17px; }
.crisis-col .contact { margin-top: 21px; }
.call { display: flex; flex-direction: column; align-items: flex-start; gap: 4px; margin-top: 19px; }
.foot-logo { margin: 71px 0 0 8px; }
.legal { display: flex; flex-wrap: wrap; gap: 8px 12px; width: 880px; margin: 35px 0 0 8px; letter-spacing: -.05px; }
.legal li { display: flex; align-items: center; gap: 11px; }
.legal li::after { content: ""; width: 1px; height: 17px; margin-top: 2px; background: #d6d7d9; }
```
